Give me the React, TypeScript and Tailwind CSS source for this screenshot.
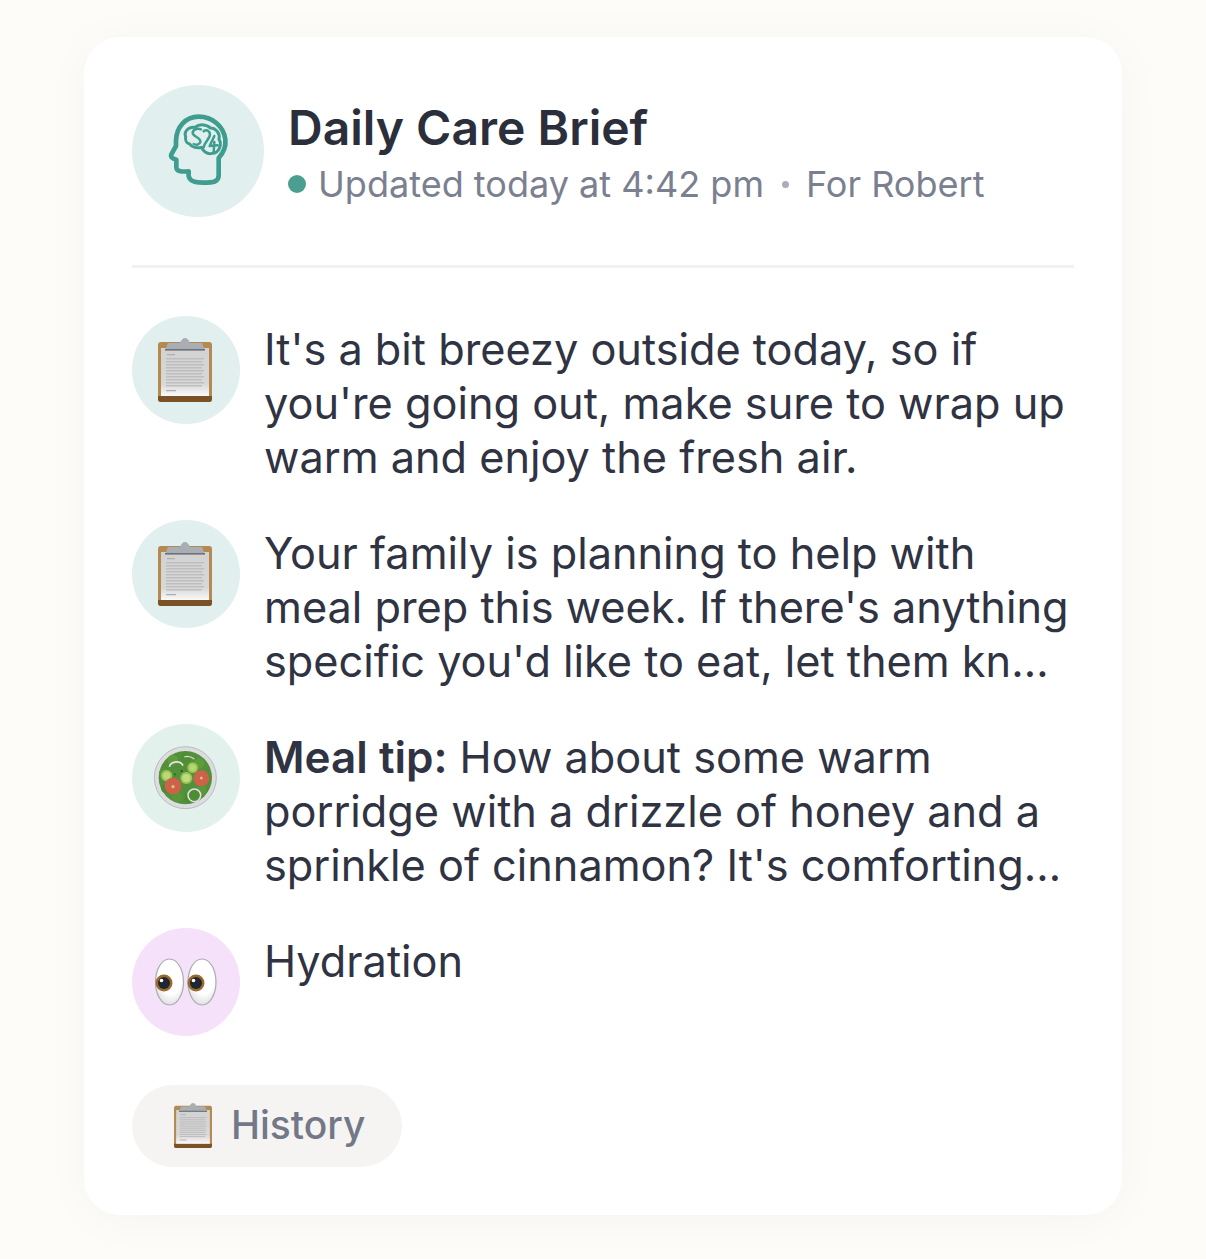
function BrainHead() {
  return (
    <svg viewBox="0 0 198 234" className="w-[66px] h-[78px] ml-[3px]" fill="none" stroke="#3f9d8f" strokeLinecap="round" strokeLinejoin="round">
      <path
        strokeWidth="14"
        d="M155 190 L155 138 C170 122 177 100 175 82 C170 42 135 14 95 14 C55 14 28 46 27 86 L27 102 L13 127 C10 135 16 140 28 143 L28 166 C29 178 40 180 65 178 L65 192 C67 206 84 212 108 212 C140 212 155 210 155 190 Z"
      />
      <path
        strokeWidth="9"
        d="M56 74 C50 58 64 44 84 46 C98 34 122 38 130 48 C148 48 160 66 156 82 C166 96 156 124 136 124 C120 128 108 118 104 106 C90 110 74 106 68 96 C58 94 54 84 56 74 Z"
      />
      <path
        strokeWidth="7.5"
        d="M102 52 C88 46 74 56 78 66 C82 76 102 76 100 90 C98 98 88 100 80 96 M110 58 C120 50 132 60 128 72 C124 84 112 92 110 106 M142 72 L128 102 L152 100 M142 90 L140 120"
      />
    </svg>
  );
}

function ClipboardEmoji({ className }: { className: string }) {
  const lines = [20, 23, 26, 29, 32, 35, 38, 41, 44, 47];
  return (
    <svg viewBox="0 0 54 64" className={className}>
      <defs>
        <linearGradient id="paper" x1="0" y1="0" x2="0" y2="1">
          <stop offset="0" stopColor="#d2d2d2" />
          <stop offset="0.75" stopColor="#d8d8d8" />
          <stop offset="1" stopColor="#fafafa" />
        </linearGradient>
      </defs>
      <rect x="0" y="4" width="54" height="60" rx="3" fill="#b48a50" />
      <path d="M0 58 H54 V61 a3 3 0 0 1 -3 3 H3 a3 3 0 0 1 -3 -3 Z" fill="#7b5227" />
      <rect x="3" y="10" width="48" height="48" fill="url(#paper)" />
      <path d="M7 12 L10 5 H22 C23 2 25 0 27 0 C29 0 31 2 32 5 H44 L47 12 Z" fill="#a9adb4" />
      <rect x="7" y="11" width="40" height="1.6" fill="#6d7178" />
      <g className="blur-[0.6px]">
        <rect x="9" y="16" width="8" height="1.2" fill="#b0b0b0" />
        {lines.map((y) => (
          <rect key={y} x="8" y={y} width={y % 2 ? 36 : 38} height="1.5" fill="#bebebe" />
        ))}
        <rect x="8" y="52" width="10" height="1.2" fill="#acacac" />
      </g>
    </svg>
  );
}

function SaladEmoji() {
  const leaves: [number, number, number, string][] = [
    [65, 45, 16, '#5f9d3c'],
    [105, 38, 16, '#4f8f34'],
    [145, 55, 16, '#5d9c3c'],
    [160, 95, 14, '#4a8a30'],
    [150, 135, 16, '#5a983a'],
    [115, 158, 15, '#4b8b32'],
    [78, 155, 16, '#589739'],
    [45, 130, 15, '#4c8c31'],
    [38, 85, 14, '#5a993a'],
  ];
  return (
    <svg viewBox="0 0 210 198" className="w-[70px] h-[66px]">
      <circle cx="103" cy="98" r="93" fill="#dcdde0" stroke="#b9bbc0" strokeWidth="3" />
      <circle cx="103" cy="98" r="80" fill="#52913a" />
      {leaves.map(([x, y, r, c]) => (
        <circle key={`${x}-${y}`} cx={x} cy={y} r={r} fill={c} />
      ))}
      <path d="M55 65 C60 48 88 45 96 62" fill="none" stroke="#ece4ea" strokeWidth="5" />
      <path d="M100 36 C110 32 120 35 130 42" fill="none" stroke="#e4d6de" strokeWidth="4" />
      <circle cx="125" cy="68" r="16" fill="#9cc556" />
      <circle cx="125" cy="68" r="10" fill="#b5d671" />
      <circle cx="47" cy="92" r="17" fill="#9cc556" />
      <circle cx="47" cy="92" r="11" fill="#bbd977" />
      <circle cx="106" cy="99" r="18" fill="#9cc556" />
      <circle cx="106" cy="99" r="12" fill="#c0dc7e" />
      <circle cx="66" cy="123" r="25" fill="#cd6149" />
      <circle cx="66" cy="125" r="5" fill="#e0bd78" />
      <circle cx="151" cy="100" r="24" fill="#cd6149" />
      <circle cx="151" cy="99" r="4.5" fill="#e0bd78" />
      <circle cx="130" cy="151" r="19" fill="#4d8d33" stroke="#e6dfe8" strokeWidth="4.5" />
      <circle cx="92" cy="78" r="3" fill="#28491f" />
      <circle cx="72" cy="88" r="2.5" fill="#28491f" />
    </svg>
  );
}

function EyesEmoji() {
  return (
    <svg viewBox="0 0 62 48" className="w-[62px] h-[48px]">
      <defs>
        <radialGradient id="white" cx="0.55" cy="0.35" r="0.75">
          <stop offset="0.55" stopColor="#ffffff" />
          <stop offset="1" stopColor="#d4d4d4" />
        </radialGradient>
      </defs>
      <ellipse cx="14.5" cy="24" rx="14" ry="23" fill="url(#white)" stroke="#a9adad" strokeWidth="1.2" />
      <ellipse cx="47" cy="24" rx="14" ry="23" fill="url(#white)" stroke="#a9adad" strokeWidth="1.2" />
      {[9, 41].map((x) => (
        <g key={x}>
          <circle cx={x} cy="25" r="8.5" fill="#9a6a2c" />
          <circle cx={x} cy="25" r="6" fill="#1f2733" />
          <circle cx={x - 2.5} cy="22.5" r="1.8" fill="#ffffff" />
        </g>
      ))}
    </svg>
  );
}

function BriefRow({ icon, bg, children }: { icon: React.ReactNode; bg: string; children: React.ReactNode }) {
  return (
    <div className="flex gap-6">
      <div className={`w-[108px] h-[108px] shrink-0 rounded-full flex items-center justify-center ${bg}`}>{icon}</div>
      <p className="pt-[6px] flex-1 text-[43.28px] leading-[54px] text-[#2f3342]">{children}</p>
    </div>
  );
}

export default function App() {
  return (
    <div className="min-h-[1259px] bg-[#fdfcf8] pt-[37px] px-[84px] font-['Inter',sans-serif]">
      <div className="h-[1178px] bg-white rounded-[36px] p-12 shadow-[0_4px_48px_rgba(0,0,0,0.035)]">
        {/* Header */}
        <div className="flex items-center gap-6 pb-[48px] border-b-[3px] border-[#f0f1f1]">
          <div className="w-[132px] h-[132px] rounded-full bg-[#e1efee] flex items-center justify-center">
            <BrainHead />
          </div>
          <div className="pt-[3px]">
            <h1 className="text-[48px] leading-[58px] font-semibold text-[#2b2f3b]">Daily Care Brief</h1>
            <div className="flex items-center text-[36.05px] leading-[44px] text-[#7b8091] mt-[5px]">
              <span className="w-[18px] h-[18px] rounded-full bg-[#4a9f90] mr-[12px]" />
              <span>Updated today at 4:42 pm</span>
              <span className="w-[7px] h-[7px] rounded-full bg-[#a9adb8] ml-[18px] mr-[17px]" />
              <span>For Robert</span>
            </div>
          </div>
        </div>

        {/* Brief items */}
        <div className="mt-[48px] flex flex-col gap-[36px]">
          <div className="h-[168px]">
            <BriefRow bg="bg-[#e1efee]" icon={<ClipboardEmoji className="w-[54px] h-[64px] mr-[3px]" />}>
              It's a bit breezy outside today, so if you're going out, make sure to wrap up warm and enjoy the fresh air.
            </BriefRow>
          </div>
          <div className="h-[168px]">
            <BriefRow bg="bg-[#e1efee]" icon={<ClipboardEmoji className="w-[54px] h-[64px] mr-[3px]" />}>
              Your family is planning to help with meal prep this week. If there's anything specific you'd like to eat, let them kn…
            </BriefRow>
          </div>
          <div className="h-[168px]">
            <BriefRow bg="bg-[#e3f1ec]" icon={<SaladEmoji />}>
              <strong className="font-semibold text-[44px]">Meal tip:</strong> How about some warm porridge with a drizzle of honey and a sprinkle of cinnamon? It's comforting…
            </BriefRow>
          </div>
          <BriefRow bg="bg-[#f5e1f9]" icon={<EyesEmoji />}>
            Hydration
          </BriefRow>
        </div>

        {/* History */}
        <button className="mt-[49px] h-[82px] w-[270px] rounded-full bg-[#f5f4f2] flex items-center pl-[42px] pb-[2px] gap-[19px] text-[39px] font-medium text-[#737888]">
          <ClipboardEmoji className="w-[38px] h-[45px]" />
          History
        </button>
      </div>
    </div>
  );
}
